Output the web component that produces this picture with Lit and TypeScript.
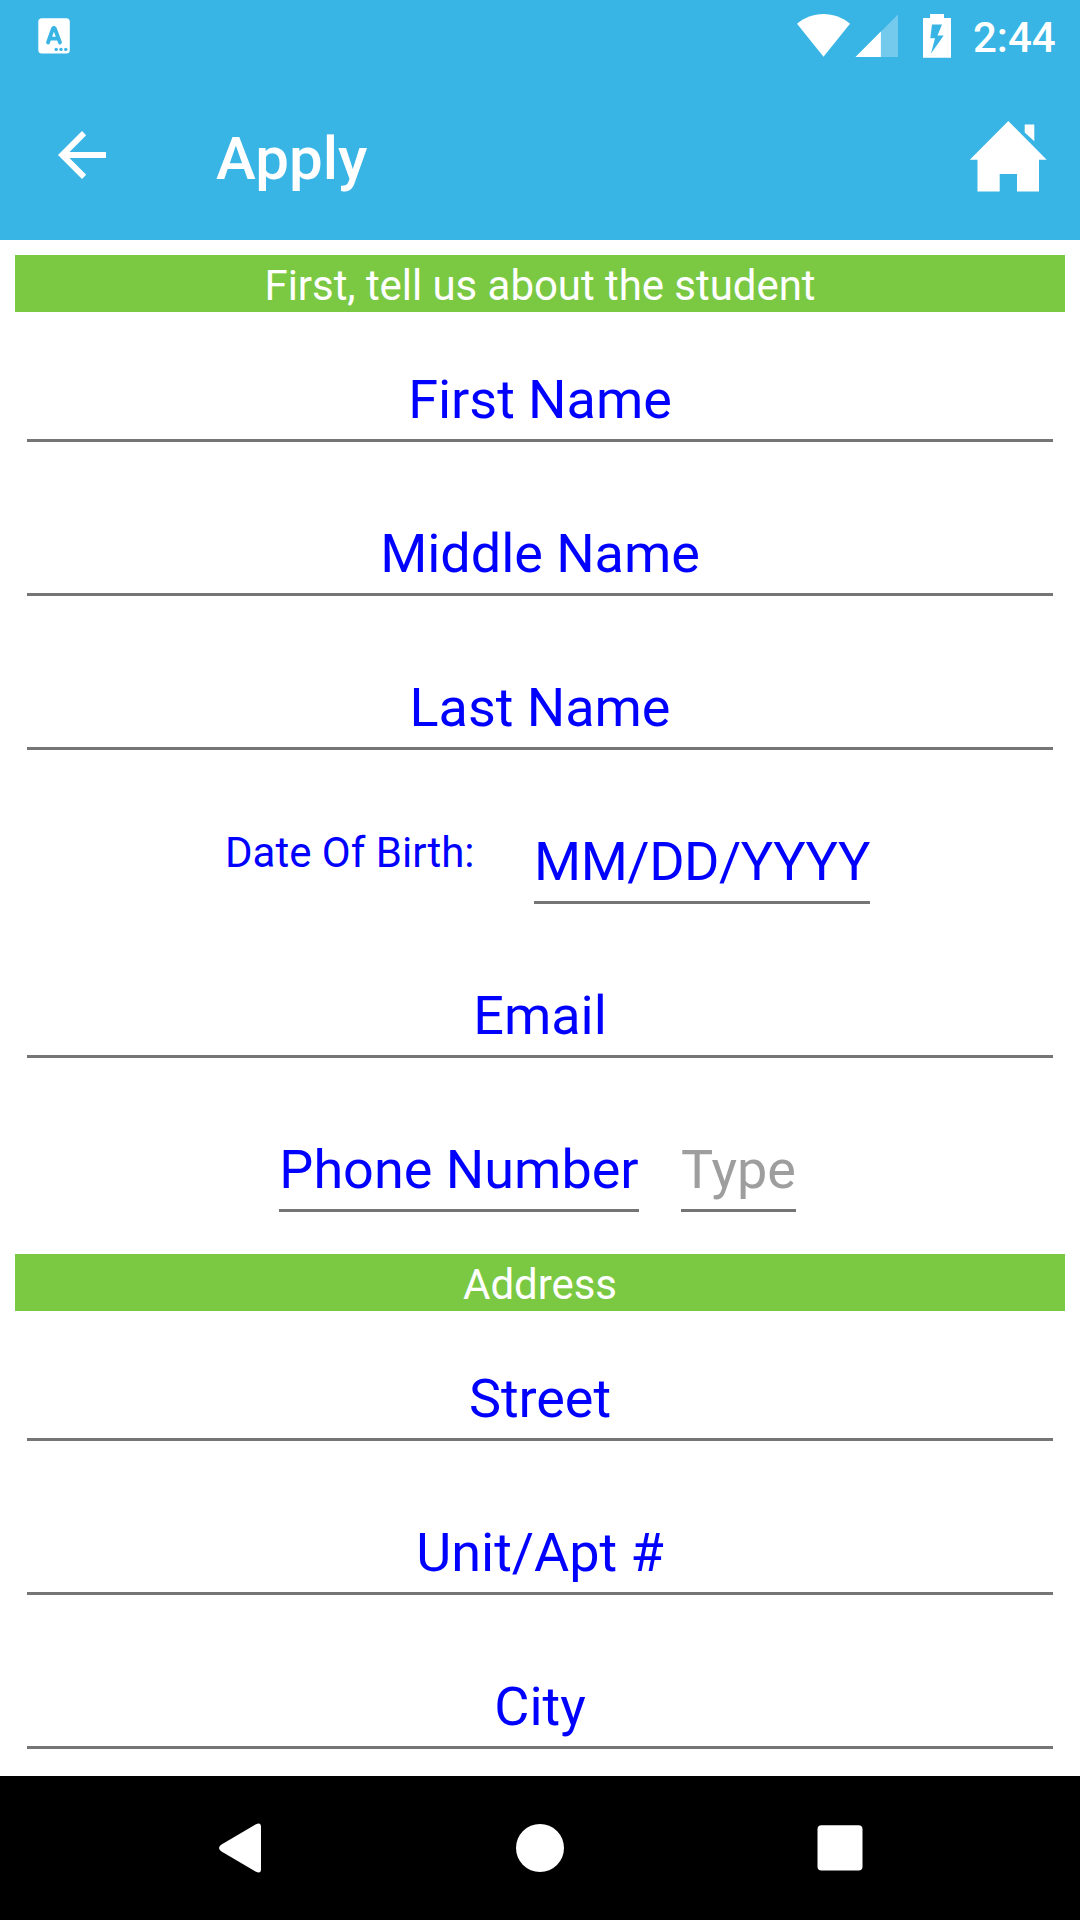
import { LitElement, html, css } from "lit";
import { customElement, property } from "lit/decorators.js";

@customElement("status-bar")
class StatusBar extends LitElement {
  static styles = css`
    :host { display: flex; align-items: flex-start; height: 72px; color: #fff; }
    .notice { margin: 18px 0 0 38px; display: block; }
    .spacer { flex: 1; }
    .wifi { margin-top: 13px; display: block; }
    .signal { margin: 13px 0 0 5px; display: block; }
    .battery { margin: 13px 0 0 25px; display: block; }
    .time { width: 83px; margin: 13px 24px 0 22px; font-size: 42px; line-height: 49px; font-weight: 500; white-space: nowrap; }
  `;
  render() {
    return html`
      <svg class="notice" width="32" height="36" viewBox="0 0 32 36">
        <rect x="0.3" y="0.3" width="31.5" height="35.3" rx="3.5" fill="#fff" />
        <path d="M10 24.5 15 10.5Q15.9 9.2 16.8 10.5L22 24.5M12 20.6H20" fill="none" stroke="#38b4e5" stroke-width="3.8" stroke-linecap="round" stroke-linejoin="round" />
        <g fill="#38b4e5"><circle cx="18.2" cy="31.4" r="1.7" /><circle cx="23" cy="31.4" r="1.7" /><circle cx="27.8" cy="31.4" r="1.7" /></g>
      </svg>
      <div class="spacer"></div>
      <svg class="wifi" width="53" height="44" viewBox="0 0 53 44"><path d="M0 10.7C7.5 4.5 16.5 1 26.5 1S45.500 4.500 53 10.700L26.500 43.800Z" fill="#fff" /></svg>
      <svg class="signal" width="43" height="44" viewBox="0 0 43 44"><path d="M43 1.500V44H0.500Z" fill="#fff" opacity=".3" /><path d="M25.900 18.600V44H0.500Z" fill="#fff" /></svg>
      <svg class="battery" width="28" height="45" viewBox="0 0 28 45"><path fill="#fff" fill-rule="evenodd" d="M7 1H21V5H28V44.700H0V5H7ZM9 11.500 7.300 25.300H12L8 40.500 20.700 22.500H14.500L19 11.500Z" /></svg>
      <div class="time">2:44</div>
    `;
  }
}

@customElement("app-toolbar")
class AppToolbar extends LitElement {
  @property() heading = "";
  static styles = css`
    :host { display: flex; align-items: flex-start; height: 168px; color: #fff; }
    .back { margin: 59px 0 0 58px; display: block; }
    .title { flex: 1; margin: 51px 0 0 110px; font-size: 60px; line-height: 71px; font-weight: 500; }
    .home { margin: 48px 33px 0 0; display: block; filter: blur(0.5px); }
  `;
  render() {
    return html`
      <svg class="back" width="48" height="48" viewBox="0 0 48 48"><path fill="#fff" d="M48 21H11.500L28.200 4.200 24 0 0 24 24 48 28.200 43.800 11.500 27H48Z" /></svg>
      <div class="title">${this.heading}</div>
      <svg class="home" width="78" height="72" viewBox="0 0 78 72"><path fill="#fff" d="M39.300 1 77.700 39.700H70V71.400H48V54H30.700V71.400H8.500V39.700H0.800ZM55.700 4.600H65.300V21.300L55.700 12.500Z" /></svg>
    `;
  }
}

@customElement("section-banner")
class SectionBanner extends LitElement {
  @property() label = "";
  static styles = css`
    :host { display: block; height: 57px; background: #7bc943; color: #fff; text-align: center; font-size: 42px; line-height: 61px; letter-spacing: -0.05px; }
  `;
  render() { return html`${this.label}`; }
}

@customElement("form-field")
class FormField extends LitElement {
  @property() hint = "";
  static styles = css`
    :host { display: block; box-sizing: border-box; height: 130px; padding-top: 56px; border-bottom: 3px solid #757575; color: #00f; font-size: 54px; line-height: 63px; text-align: center; white-space: nowrap; }
  `;
  render() { return html`${this.hint}`; }
}

@customElement("app-root")
class AppRoot extends LitElement {
  static styles = css`
    :host { display: flex; flex-direction: column; height: 1920px; overflow: hidden; background: #fff; font-family: Roboto, sans-serif; }
    .header { height: 240px; background: #38b4e5; }
    .body { flex: 1; padding: 15px 15px 0; overflow: hidden; }
    .fields { padding: 0 12px; }
    .student { margin-bottom: 18px; }
    .row { height: 154px; display: flex; }
    .full { flex: 1; letter-spacing: -0.05px; }
    .caption { margin: 54px 60px 0 198px; width: 249px; font-size: 42px; line-height: 49px; color: #00f; white-space: nowrap; }
    .date { width: 336px; letter-spacing: -0.5px; }
    .phone { width: 360px; margin: 0 42px 0 252px; }
    .type { width: 115px; color: #9e9e9e; }
    .nav { height: 144px; background: #000; display: flex; justify-content: center; }
    .navicons { display: block; }
  `;
  private full(hint: string) {
    return html`<div class="row"><form-field class="full" hint=${hint}></form-field></div>`;
  }
  render() {
    return html`
      <div class="header">
        <status-bar></status-bar>
        <app-toolbar heading="Apply"></app-toolbar>
      </div>
      <div class="body">
        <section-banner label="First, tell us about the student"></section-banner>
        <div class="fields student">
          ${["First Name", "Middle Name", "Last Name"].map((h) => this.full(h))}
          <div class="row">
            <div class="caption">Date Of Birth:</div>
            <form-field class="date" hint="MM/DD/YYYY"></form-field>
          </div>
          ${this.full("Email")}
          <div class="row">
            <form-field class="phone" hint="Phone Number"></form-field>
            <form-field class="type" hint="Type"></form-field>
          </div>
        </div>
        <section-banner label="Address"></section-banner>
        <div class="fields">
          ${["Street", "Unit/Apt #", "City"].map((h) => this.full(h))}
        </div>
      </div>
      <div class="nav">
        <svg class="navicons" width="1080" height="144" viewBox="0 0 1080 144" fill="#fff">
          <path d="M255.500 48.600Q261 45.500 261 51V93Q261 98.500 255.500 95.400L221.500 75.500Q216.500 72 221.500 68.500Z" />
          <circle cx="540" cy="72" r="24" />
          <rect x="817.500" y="49.300" width="45" height="45.200" rx="4" />
        </svg>
      </div>
    `;
  }
}
